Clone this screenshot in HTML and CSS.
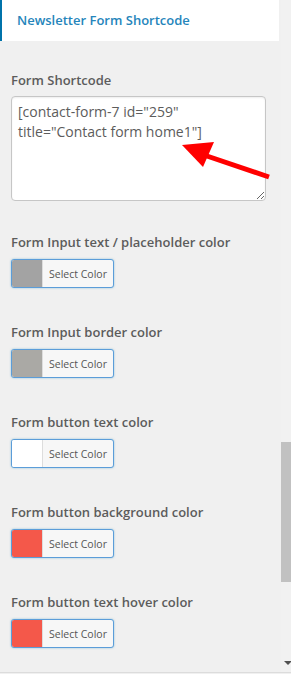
FILE: index.html
```html
<!DOCTYPE html>
<html lang="en">
<head>
    <meta charset="UTF-8">
    <meta name="viewport" content="width=device-width, initial-scale=1.0">
    <title>Newsletter Form Shortcode</title>
    <link rel="stylesheet" href="styles.css">
</head>
<body>
    <div class="panel">
        <div class="content">
            <div class="tab">Newsletter Form Shortcode</div>
            <div class="field field-first">
                <label class="label" for="shortcode">Form Shortcode</label>
                <div class="shortcode-box">
                    <textarea id="shortcode" class="shortcode" readonly>[contact-form-7 id="259" title="Contact form home1"]</textarea>
                    <svg class="arrow" width="270" height="110" viewBox="0 0 270 110">
                        <line x1="258" y1="81" x2="190" y2="58" stroke="#ff0000" stroke-width="5"/>
                        <polygon points="171,49 203,46 192,71" fill="#ff0000"/>
                    </svg>
                </div>
            </div>
            <div class="field field-color">
                <div class="label">Form Input text / placeholder color</div>
                <button type="button" class="color-btn"><span class="swatch swatch-gray"></span><span class="color-text">Select Color</span></button>
            </div>
            <div class="field">
                <div class="label">Form Input border color</div>
                <button type="button" class="color-btn"><span class="swatch swatch-stone"></span><span class="color-text">Select Color</span></button>
            </div>
            <div class="field">
                <div class="label">Form button text color</div>
                <button type="button" class="color-btn"><span class="swatch swatch-white"></span><span class="color-text">Select Color</span></button>
            </div>
            <div class="field">
                <div class="label">Form button background color</div>
                <button type="button" class="color-btn"><span class="swatch swatch-red"></span><span class="color-text">Select Color</span></button>
            </div>
            <div class="field">
                <div class="label">Form button text hover color</div>
                <button type="button" class="color-btn"><span class="swatch swatch-red"></span><span class="color-text">Select Color</span></button>
            </div>
        </div>
        <div class="scrollbar">
            <div class="thumb"></div>
            <div class="scroll-down"></div>
        </div>
    </div>
</body>
</html>
```

FILE: styles.css
```css
body {
    margin: 0;
    background-color: #f0f0f0;
    font-family: "Open Sans", "Noto Sans", sans-serif;
}
.panel {
    display: flex;
    height: 672px;
    border-bottom: 1px solid #dcdcdc;
}
.content {
    flex: 1;
    overflow: hidden;
}
.tab {
    width: 262px;
    height: 41px;
    background-color: #fff;
    border-left: 2px solid #0073aa;
    padding-left: 15px;
    line-height: 40px;
    font-size: 13px;
    font-weight: 600;
    color: #2585bb;
}
.field {
    padding: 0 11px;
    margin-top: 34px;
}
.field-first {
    margin-top: 29px;
}
.field-color {
    margin-top: 31px;
}
.label {
    display: block;
    font-size: 13px;
    font-weight: 600;
    color: #5c5c5c;
    line-height: 20px;
}
.shortcode-box {
    position: relative;
    width: 255px;
    margin-top: 6px;
}
.shortcode {
    display: block;
    width: 255px;
    height: 105px;
    box-sizing: border-box;
    margin: 0;
    padding: 5px 6px;
    border: 1px solid #c6c6c6;
    border-radius: 4px;
    background-color: #fff;
    font-family: "Open Sans", "Noto Sans", sans-serif;
    font-size: 14px;
    line-height: 20px;
    color: #5c5c5c;
    resize: vertical;
    box-shadow: inset 0 1px 2px rgba(0, 0, 0, 0.07);
}
.arrow {
    position: absolute;
    left: 0;
    top: 0;
}
.color-btn {
    display: flex;
    align-items: stretch;
    width: 103px;
    height: 29px;
    margin-top: 7px;
    padding: 0;
    border: 1px solid #5b9dd9;
    border-radius: 3px;
    background-color: #f7f7f7;
    box-shadow: 0 0 2px rgba(30, 140, 190, 0.5);
    overflow: hidden;
    cursor: pointer;
}
.swatch {
    width: 30px;
    border-right: 1px solid #ddd;
}
.swatch-gray {
    background-color: #a3a3a3;
}
.swatch-stone {
    background-color: #aaa9a5;
}
.swatch-white {
    background-color: #fff;
}
.swatch-red {
    background-color: #f4584a;
}
.color-text {
    flex: 1;
    align-self: center;
    text-align: center;
    font-family: "Open Sans", "Noto Sans", sans-serif;
    font-size: 10.5px;
    color: #555;
}
.scrollbar {
    width: 10px;
    background-color: #f1f1f1;
    display: flex;
    flex-direction: column;
}
.thumb {
    margin-top: 442px;
    height: 140px;
    background-color: #c1c1c1;
}
.scroll-down {
    margin-top: auto;
    margin-bottom: 7px;
    margin-left: 3px;
    width: 0;
    height: 0;
    border-left: 4px solid transparent;
    border-right: 4px solid transparent;
    border-top: 4px solid #505050;
}
```
